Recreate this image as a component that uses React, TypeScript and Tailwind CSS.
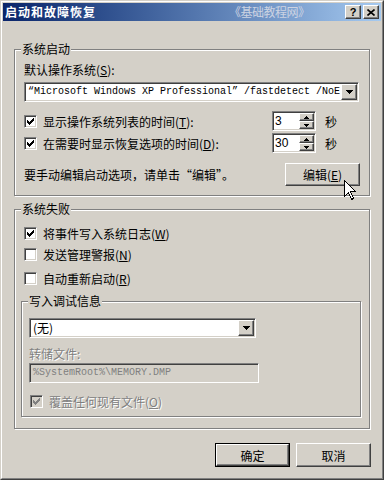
import React from "react";

const RAISED =
  "border border-t-white border-l-white border-r-[#404040] border-b-[#404040] shadow-[inset_-1px_-1px_0_#808080] bg-[#d4d0c8]";
const SUNKEN =
  "border border-t-[#808080] border-l-[#808080] border-r-white border-b-white shadow-[inset_1px_1px_0_#404040,inset_-1px_-1px_0_#d4d0c8]";
const DISABLED_TEXT = "text-[#808080] [text-shadow:1px_1px_0_#ffffff]";

function CheckMark({ color }: { color: string }) {
  const cols = [4, 5, 6, 5, 4, 3, 2];
  return (
    <svg className="absolute left-0 top-0" width="11" height="11" viewBox="0 0 11 11" shapeRendering="crispEdges">
      {cols.map((y, i) => (
        <rect key={i} x={2 + i} y={y} width="1" height="3" fill={color} />
      ))}
    </svg>
  );
}

function Check({ checked, disabled }: { checked?: boolean; disabled?: boolean }) {
  return (
    <div className={`relative w-[13px] h-[13px] shrink-0 ${SUNKEN} ${disabled ? "bg-[#d4d0c8]" : "bg-white"}`}>
      {checked && <CheckMark color={disabled ? "#808080" : "#000000"} />}
    </div>
  );
}

function DownArrow() {
  return (
    <svg width="7" height="4" viewBox="0 0 7 4" shapeRendering="crispEdges">
      <rect x="0" y="0" width="7" height="1" fill="#000" />
      <rect x="1" y="1" width="5" height="1" fill="#000" />
      <rect x="2" y="2" width="3" height="1" fill="#000" />
      <rect x="3" y="3" width="1" height="1" fill="#000" />
    </svg>
  );
}

function SmallArrow({ up }: { up?: boolean }) {
  return (
    <svg width="5" height="3" viewBox="0 0 5 3" shapeRendering="crispEdges">
      {up ? (
        <>
          <rect x="2" y="0" width="1" height="1" fill="#000" />
          <rect x="1" y="1" width="3" height="1" fill="#000" />
          <rect x="0" y="2" width="5" height="1" fill="#000" />
        </>
      ) : (
        <>
          <rect x="0" y="0" width="5" height="1" fill="#000" />
          <rect x="1" y="1" width="3" height="1" fill="#000" />
          <rect x="2" y="2" width="1" height="1" fill="#000" />
        </>
      )}
    </svg>
  );
}

function Spin({ value }: { value: string }) {
  return (
    <div className={`w-[44px] h-[20px] shrink-0 bg-white p-[1px] flex ${SUNKEN}`}>
      <div className="flex-1 pl-[1px] font-['Liberation_Sans',sans-serif] text-[12px] leading-[16px]">{value}</div>
      <div className="w-[15px] flex flex-col">
        <div className={`h-[8px] flex items-center justify-center ${RAISED}`}>
          <SmallArrow up />
        </div>
        <div className={`h-[8px] flex items-center justify-center ${RAISED}`}>
          <SmallArrow />
        </div>
      </div>
    </div>
  );
}

function Legend({ children }: { children: React.ReactNode }) {
  return (
    <span className="absolute left-[6px] top-[-8px] px-[1px] bg-[#d4d0c8] leading-[14px] whitespace-nowrap">
      {children}
    </span>
  );
}

function U({ children }: { children: React.ReactNode }) {
  return <span className="underline underline-offset-[1px]">{children}</span>;
}

export default function App() {
  return (
    <div className="relative w-[384px] h-[480px] bg-[#d4d0c8] border border-t-[#d4d0c8] border-l-[#d4d0c8] border-r-[#404040] border-b-[#404040] font-['Noto_Sans_CJK_SC',sans-serif] text-[12px] text-black overflow-hidden">
      <div className="h-full border border-t-white border-l-white border-r-[#808080] border-b-[#808080] p-[1px] flex flex-col">
        {/* Title bar */}
        <div className="h-[18px] shrink-0 bg-linear-to-r from-[#0a246a] to-[#a6caf0] flex items-center pl-[2px] pr-[2px]">
          <span className="text-white font-bold text-[12px] leading-[14px] tracking-[1px] whitespace-nowrap">启动和故障恢复</span>
          <span className="ml-[133px] text-[#ccd3e2] text-[12px] leading-[14px] whitespace-nowrap tracking-[-0.5px]">《基础教程网》</span>
          <div className="ml-auto flex gap-[2px]">
            <div className={`w-[16px] h-[14px] flex items-center justify-center ${RAISED}`}>
              <span className="font-['Liberation_Sans',sans-serif] font-bold text-[11px] leading-[11px]">?</span>
            </div>
            <div className={`w-[16px] h-[14px] flex items-center justify-center ${RAISED}`}>
              <svg width="8" height="7" viewBox="0 0 8 7">
                <path d="M0.5 0.5 L7.5 6.5 M7.5 0.5 L0.5 6.5" stroke="#000" strokeWidth="1.6" />
              </svg>
            </div>
          </div>
        </div>

        {/* Content */}
        <div className="flex flex-col pl-[11px]">
          {/* Group 1 */}
          <div className="relative mt-[28px] w-[356px] h-[147px] border border-[#808080] shadow-[inset_1px_1px_0_#fff,1px_1px_0_#fff] pt-[13px] pl-[9px] flex flex-col">
            <Legend>系统启动</Legend>
            <div className="h-[13px] leading-[13px] whitespace-nowrap">
              默认操作系统(<U>S</U>):
            </div>
            <div className={`mt-[6px] w-[335px] h-[20px] bg-white p-[1px] flex ${SUNKEN}`}>
              <div className="flex-1 overflow-hidden whitespace-nowrap pl-[2px] font-['Liberation_Mono',monospace] text-[10px] leading-[16px]">
                “Microsoft Windows XP Professional” /fastdetect /NoE
              </div>
              <div className={`w-[16px] shrink-0 flex items-center justify-center ${RAISED}`}>
                <DownArrow />
              </div>
            </div>
            <div className="mt-[9px] h-[20px] flex items-center">
              <Check checked />
              <span className="ml-[6px] w-[229px] leading-[13px] whitespace-nowrap">
                显示操作系统列表的时间(<U>T</U>):
              </span>
              <Spin value="3" />
              <span className="ml-[9px] leading-[13px]">秒</span>
            </div>
            <div className="mt-[2px] h-[20px] flex items-center">
              <Check checked />
              <span className="ml-[6px] w-[229px] leading-[13px] whitespace-nowrap">
                在需要时显示恢复选项的时间(<U>D</U>):
              </span>
              <Spin value="30" />
              <span className="ml-[9px] leading-[13px]">秒</span>
            </div>
            <div className="mt-[10px] h-[23px] flex items-center">
              <span className="flex-1 leading-[13px] whitespace-nowrap">要手动编辑启动选项，请单击“编辑”。</span>
              <div className={`w-[75px] h-[23px] mr-[9px] flex items-center justify-center ${RAISED}`}>
                <span className="leading-[13px]">
                  编辑(<U>E</U>)
                </span>
              </div>
            </div>
          </div>

          {/* Group 2 */}
          <div className="relative mt-[13px] w-[356px] h-[220px] border border-[#808080] shadow-[inset_1px_1px_0_#fff,1px_1px_0_#fff] pt-[17px] pl-[6px] flex flex-col">
            <Legend>系统失败</Legend>
            <div className="h-[13px] pl-[3px] flex items-center">
              <Check checked />
              <span className="ml-[6px] leading-[13px] whitespace-nowrap">
                将事件写入系统日志(<U>W</U>)
              </span>
            </div>
            <div className="mt-[8px] h-[13px] pl-[3px] flex items-center">
              <Check />
              <span className="ml-[6px] leading-[13px] whitespace-nowrap">
                发送管理警报(<U>N</U>)
              </span>
            </div>
            <div className="mt-[11px] h-[13px] pl-[3px] flex items-center">
              <Check />
              <span className="ml-[6px] leading-[13px] whitespace-nowrap">
                自动重新启动(<U>R</U>)
              </span>
            </div>

            {/* Inner group */}
            <div className="relative mt-[16px] w-[340px] h-[116px] border border-[#808080] shadow-[inset_1px_1px_0_#fff,1px_1px_0_#fff] pt-[16px] pl-[7px] flex flex-col">
              <Legend>写入调试信息</Legend>
              <div className={`w-[227px] h-[20px] bg-white p-[1px] flex ${SUNKEN}`}>
                <div className="flex-1 pl-[2px] leading-[16px] whitespace-nowrap">(无)</div>
                <div className={`w-[16px] shrink-0 flex items-center justify-center ${RAISED}`}>
                  <DownArrow />
                </div>
              </div>
              <div className={`mt-[9px] h-[13px] leading-[13px] whitespace-nowrap ${DISABLED_TEXT}`}>转储文件:</div>
              <div className={`mt-[3px] w-[230px] h-[20px] bg-[#d4d0c8] p-[1px] flex ${SUNKEN}`}>
                <div className="pl-[2px] font-['Liberation_Mono',monospace] text-[10px] leading-[16px] text-[#808080] whitespace-nowrap">
                  %SystemRoot%\MEMORY.DMP
                </div>
              </div>
              <div className="mt-[12px] h-[13px] pl-[1px] flex items-center">
                <Check checked disabled />
                <span className={`ml-[6px] leading-[13px] whitespace-nowrap ${DISABLED_TEXT}`}>
                  覆盖任何现有文件(<U>O</U>)
                </span>
              </div>
            </div>
          </div>

          {/* Buttons */}
          <div className="mt-[14px] flex justify-end gap-[6px] pr-[10px]">
            <div className="w-[75px] h-[24px] border border-black">
              <div className={`w-full h-full flex items-center justify-center ${RAISED}`}>
                <span className="leading-[13px]">确定</span>
              </div>
            </div>
            <div className={`w-[75px] h-[24px] flex items-center justify-center ${RAISED}`}>
              <span className="leading-[13px]">取消</span>
            </div>
          </div>
        </div>
      </div>

      {/* Mouse cursor */}
      <svg className="absolute left-[343px] top-[179px]" width="13" height="21" viewBox="0 0 13 21" shapeRendering="crispEdges">
        <path d="M0.5 0.5 L0.5 16.5 L4.5 12.5 L7.5 19.5 L9.5 18.5 L6.5 11.5 L11.5 11.5 Z" fill="#fff" stroke="#000" strokeWidth="1" />
      </svg>
    </div>
  );
}
